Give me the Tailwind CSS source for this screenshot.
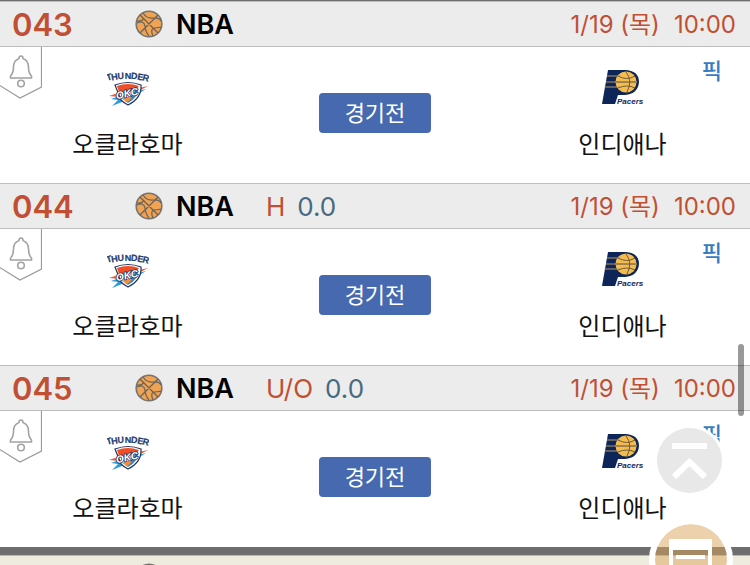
<!DOCTYPE html>
<html lang="ko">
  <head>
    <meta charset="UTF-8" />
    <meta name="viewport" content="width=device-width, initial-scale=1.0" />
    <script src="https://cdn.jsdelivr.net/npm/@tailwindcss/browser@4"></script>
    <title>NBA 경기 목록</title>
  </head>
  <body class="flex h-screen flex-col overflow-hidden bg-white font-['Inter','Noto_Sans_CJK_KR',sans-serif]">
    <!-- Shared icons -->
    <svg class="hidden">
      <symbol id="basketball" viewBox="0 0 28 28">
        <circle cx="14" cy="14" r="12.800" fill="#f0a352" stroke="#777470" stroke-width="1.6" />
        <path d="M5 5 L23 23 M23 5 L5 23 M8 3 Q12 9 18 8 Q24 7 26 11 M2 13 Q9 10 10 16 Q10 21 14 26 M18 26 Q15 19 19 18 Q23 18 26 17 M2 11 Q7 12 9 8" fill="none" stroke="#67625a" stroke-width="1.2" />
      </symbol>
      <symbol id="bell" viewBox="0 0 42 52">
        <path d="M41.500 0 V40 L20 51 L-1 38" fill="#fff" stroke="#999" stroke-width="1.2" />
        <path d="M19 11.500 Q19 9 21 9 Q23 9 23 11.500 C27 13 28.500 16 28.500 20 C28.500 25 29.500 27 31.500 29 V31 H10.500 V29 C12.500 27 13.500 25 13.500 20 C13.500 16 15 13 19 11.500 Z" fill="none" stroke="#a3a3a3" stroke-width="1.6" />
        <circle cx="21" cy="36.500" r="3.300" fill="none" stroke="#a3a3a3" stroke-width="1.6" />
      </symbol>
      <symbol id="thunder" viewBox="0 0 42 40">
        <path d="M4 32 L15 28 L39 22 L31 27 L25 31 L5 39 L11 33 Z" fill="#2f9bdc" />
        <path d="M2 29 L14 25 L41 19 L28 26 L12 30 Z" fill="#ef5b2f" />
        <path d="M8 18 Q21 13 34 18 Q35 31 21 38 Q17 36 14 33 Z" fill="#fff" stroke="#24345f" stroke-width="1.2" />
        <path d="M10 19 Q21 15 32 19 Q27 26 12 25 Z" fill="#ef4f25" />
        <path d="M31 20 Q32 30 21 36 L18 34 Q27 30 28 21 Z" fill="#2f86c8" />
        <path d="M15 32 L26 28 Q23 34 20 35 Z" fill="#f0903a" />
        <text x="9" y="30" transform="rotate(-12 20 27)" font-family="Liberation Sans" font-size="10" font-weight="bold" font-style="italic" fill="#fff" stroke="#24345f" stroke-width="1.6" paint-order="stroke">OKC</text>
        <g font-family="Liberation Sans" font-size="9" font-weight="bold" text-anchor="middle" fill="#24406f" stroke="#24406f" stroke-width=".2">
          <text transform="translate(3 13) rotate(-16)">T</text>
          <text transform="translate(8 13) rotate(-10)">H</text>
          <text transform="translate(14 12) rotate(-5)">U</text>
          <text transform="translate(21 12)">N</text>
          <text transform="translate(27 12) rotate(5)">D</text>
          <text transform="translate(33 13) rotate(10)">E</text>
          <text transform="translate(38 14) rotate(16)">R</text>
        </g>
      </symbol>
      <symbol id="pacers" viewBox="0 0 42 40">
        <path d="M6 3 H24 Q37 4 37 15 Q36 27 23 28 H16 L13 37 H0 Z" fill="#0d2558" />
        <circle cx="24" cy="15" r="10.500" fill="#f3bc50" />
        <path d="M5 9 H18 M4 15 H35 M2.500 20 H17" stroke="#b99a62" stroke-width="1.2" />
        <path d="M14 15 H34 M16 9 Q25 14 33 9 M16 21 Q25 17 33 21 M24 5 Q31 14 25 25" fill="none" stroke="#6f5a38" stroke-width="1" />
        <text x="15" y="37" font-family="Liberation Sans" font-size="8" font-weight="bold" font-style="italic" fill="#10285c" stroke="#fff" stroke-width="1.2" paint-order="stroke">Pacers</text>
      </symbol>
    </svg>

    <main id="games" class="border-t border-[#6e6e6e]"></main>

    <!-- Next group -->
    <div class="h-2 shrink-0 bg-[#6e6e6e]"></div>
    <div class="min-h-0 flex-1 overflow-hidden border-t border-[#b9b9b5] bg-[#eeecdf] pl-[135px] pt-[7px]">
      <svg class="size-7"><use href="#basketball" /></svg>
    </div>

    <!-- Scroll thumb -->
    <div class="fixed right-[6px] top-[344px] h-[72px] w-[6px] rounded-full bg-black/40"></div>

    <!-- Floating buttons -->
    <button aria-label="맨 위로" onclick="window.scrollTo(0, 0)" class="fixed bottom-[72px] right-7 size-[65px] rounded-full bg-[#e8e8e8] ring-3 ring-white">
      <svg viewBox="0 0 65 65" fill="none" stroke="#fff">
        <path d="M15 18 H50" stroke-width="6" />
        <path d="M17 49 L32.500 34 L48 49" stroke-width="6" />
      </svg>
    </button>
    <button aria-label="구매 내역" class="fixed -bottom-[37px] right-[17px] size-[84px] rounded-full border-6 border-white bg-[#dca35a]/50 bg-clip-padding">
      <svg viewBox="0 0 72 72" fill="#fff">
        <path d="M14 15 H57 V58 H14 Z M18 26 V54 H53 V26 Z" fill-rule="evenodd" />
        <path d="M21 31 H50 V35 H21 Z M21 41 H50 V45 H21 Z" />
      </svg>
    </button>

    <script>
      const games = [
        { no: "043", type: "", value: "" },
        { no: "044", type: "H", value: "0.0" },
        { no: "045", type: "U/O", value: "0.0" },
      ];

      const list = document.getElementById("games");
      games.forEach((game) => {
        const section = document.createElement("section");
        section.innerHTML = `
          <header class="flex h-[46px] items-center border-y border-[#bdbdbd] bg-[#ececec] pl-3 pr-[14px] text-2xl text-[#c14f33]">
            <span class="w-[123px] pt-0.5 text-[31px] font-semibold">${game.no}</span>
            <svg class="mr-[13px] size-7"><use href="#basketball" /></svg>
            <h2 class="mr-8 pt-0.5 text-[27px] font-semibold text-black">NBA</h2>
            <span class="mr-3 pt-0.5 text-[26px]">${game.type}</span>
            <span class="pt-0.5 text-[26px] text-[#466a80]">${game.value}</span>
            <time class="ml-auto flex gap-[14px] pt-0.5"><span>1/19 (목)</span><span>10:00</span></time>
          </header>
          <div class="relative grid h-[136px] grid-cols-[34%_32%_34%]">
            <button aria-label="알림" class="absolute left-0 top-0">
              <svg class="h-[52px] w-[42px]"><use href="#bell" /></svg>
            </button>
            <div class="flex flex-col items-center pt-5">
              <svg class="h-10 w-[42px]"><use href="#thunder" /></svg>
              <p class="mt-5 text-2xl leading-9 text-[#111]">오클라호마</p>
            </div>
            <div class="flex items-start justify-center pt-[46px]">
              <button class="h-10 w-28 rounded bg-[#4669af] text-[22px] text-white">경기전</button>
            </div>
            <div class="flex flex-col items-center pt-5">
              <svg class="h-10 w-[42px]"><use href="#pacers" /></svg>
              <p class="mt-5 text-2xl leading-9 text-[#111]">인디애나</p>
            </div>
            <a href="#" class="absolute right-7 top-2 text-[22px] font-medium leading-8 text-[#347dc3]">픽</a>
          </div>
        `;
        list.appendChild(section);
      });
    </script>
  </body>
</html>
